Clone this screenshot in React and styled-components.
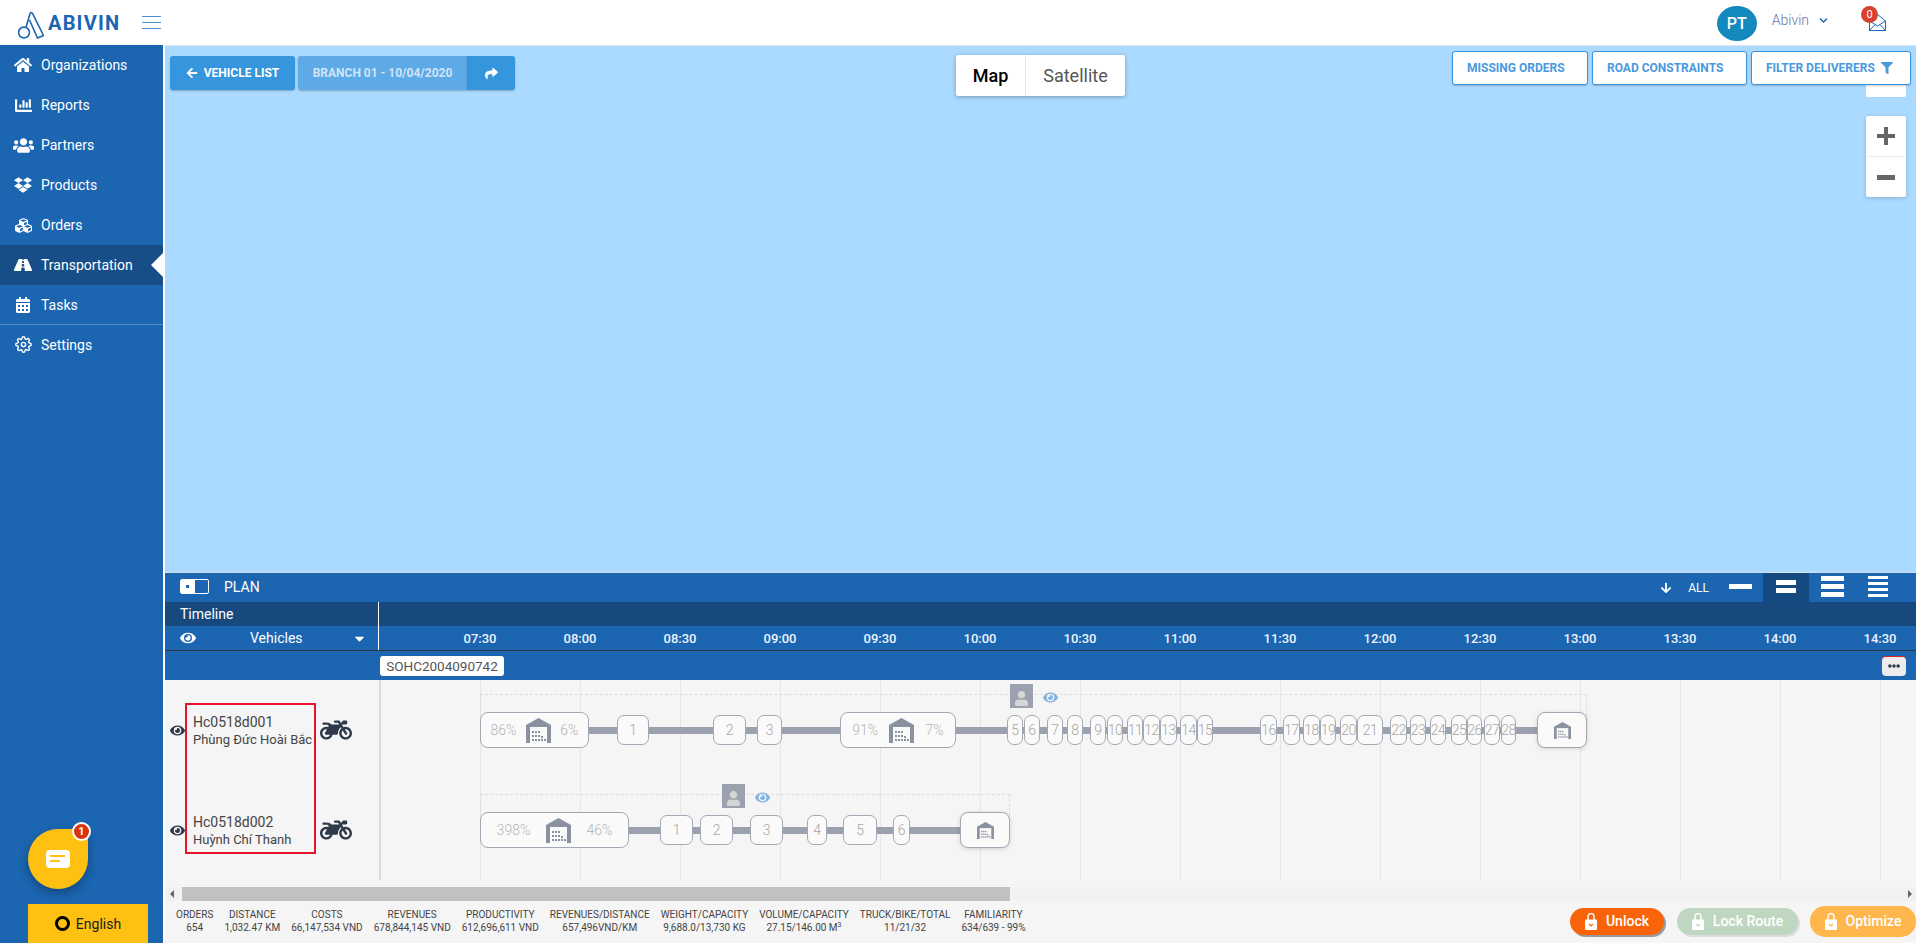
import React from 'react';
import styled, { createGlobalStyle } from 'styled-components';
import {
  FaHome, FaChartBar, FaUsers, FaDropbox, FaCubes, FaRoad, FaCalendarAlt, FaChevronDown,
  FaArrowLeft, FaShare, FaFilter, FaArrowDown, FaEye, FaCaretDown,
  FaMotorcycle, FaUser, FaEllipsisH,
} from 'react-icons/fa';
import { FiSettings } from 'react-icons/fi';

const GlobalStyle = createGlobalStyle`
  html, body, #root { margin: 0; height: 100%; }
  body { font-family: Roboto, "Liberation Sans", sans-serif; overflow: hidden; background: #fff; }
  * { box-sizing: border-box; }
`;

const BLUE = '#1b65b1';
const CHART_LEFT = 381;

const Page = styled.div`
  display: flex;
  flex-direction: column;
  height: 943px;
  overflow: hidden;
`;

const Header = styled.header`
  height: 45px;
  flex: none;
  display: flex;
  align-items: center;
  background: #fff;
  padding: 0 30px 0 18px;
`;

const LogoMark = styled.svg`
  width: 26px;
  height: 28px;
  margin-top: 4px;
`;

const LogoText = styled.span`
  margin-left: 4px;
  color: ${BLUE};
  font-size: 20px;
  font-weight: 700;
  letter-spacing: 1.2px;
`;

const Burger = styled.div`
  margin-left: 22px;
  width: 19px;
  display: flex;
  flex-direction: column;
  gap: 5.3px;
  span { height: 1px; background: #4a8fd0; }
`;

const HeaderRight = styled.div`
  margin-left: auto;
  display: flex;
  align-items: center;
`;

const Avatar = styled.div`
  width: 40px;
  height: 35px;
  margin-top: 1px;
  border-radius: 50%;
  background: #1389bd;
  color: #fff;
  font-size: 16px;
  font-weight: 500;
  display: flex;
  align-items: center;
  justify-content: center;
`;

const UserName = styled.span`
  margin-left: 15px;
  color: #6a74a8;
  font-size: 14px;
  font-weight: 300;
  margin-top: -5px;
`;

const UserChevron = styled(FaChevronDown)`
  margin-left: 10px;
  margin-top: -5px;
  color: ${BLUE};
  font-size: 9px;
`;

const Mail = styled.div`
  position: relative;
  margin-left: 41px;
  margin-top: -1px;
  line-height: 0;
`;

const MailBadge = styled.span`
  position: absolute;
  left: -8px;
  top: -8px;
  width: 17px;
  height: 17px;
  border-radius: 50%;
  background: #d9412f;
  color: #fff;
  font-size: 11px;
  line-height: 17px;
  text-align: center;
`;

const Body = styled.div`
  flex: 1;
  display: flex;
  min-height: 0;
`;

const Sidebar = styled.nav`
  position: relative;
  width: 163px;
  flex: none;
  margin-right: 2px;
  background: ${BLUE};
  display: flex;
  flex-direction: column;
`;

const NavItem = styled.div`
  position: relative;
  height: 40px;
  display: flex;
  align-items: center;
  color: #fff;
  font-size: 14px;
  background: ${(p) => (p.$active ? '#174e88' : 'transparent')};
  ${(p) => p.$divided && 'border-top: 1px solid rgba(255,255,255,.25); margin-top: -1px;'}
  ${(p) => p.$active && `
    &::after {
      content: '';
      position: absolute;
      right: 0;
      top: 8px;
      border-style: solid;
      border-width: 12px 12px 12px 0;
      border-color: transparent #fff transparent transparent;
    }
  `}
`;

const NavIcon = styled.span`
  width: 41px;
  flex: none;
  display: flex;
  justify-content: center;
  padding-left: 5px;
  font-size: ${(p) => p.$size}px;
`;

const ChatBubble = styled.div`
  position: absolute;
  left: 28px;
  top: 784px;
  width: 60px;
  height: 60px;
  background: #fec111;
  border-radius: 50% 12% 50% 50%;
  box-shadow: 0 4px 10px rgba(0, 0, 0, 0.3);
  display: flex;
  align-items: center;
  justify-content: center;
`;

const ChatBadge = styled.span`
  position: absolute;
  right: -3px;
  top: -7px;
  width: 19px;
  height: 19px;
  border-radius: 50%;
  border: 2px solid #fff;
  background: #d8340f;
  color: #fff;
  font-size: 11px;
  font-weight: 700;
  line-height: 15px;
  text-align: center;
`;

const LanguageButton = styled.div`
  margin: auto 0 0 28px;
  width: 120px;
  height: 39px;
  background: #fec111;
  color: #1c1c1c;
  font-size: 14px;
  display: flex;
  align-items: center;
  justify-content: center;
  gap: 6px;
`;

const LanguageDot = styled.span`
  width: 15px;
  height: 15px;
  border-radius: 50%;
  border: 3px solid #000;
`;

const Main = styled.main`
  flex: 1;
  min-width: 0;
  display: flex;
  flex-direction: column;
`;

const MapArea = styled.section`
  position: relative;
  flex: 1;
  background: #aadaff;
  border-top: 1px solid #dfe6ec;
`;

const MapToolbar = styled.div`
  position: absolute;
  inset: 5px 5px auto 5px;
  display: grid;
  grid-template-columns: 1fr auto 1fr;
  align-items: start;
  z-index: 2;
`;

const ToolGroupLeft = styled.div`
  display: flex;
  gap: 3px;
  padding-top: 5px;
`;

const ToolGroupRight = styled.div`
  display: flex;
  justify-content: flex-end;
  gap: 4px;
`;

const FilledButton = styled.div`
  height: 34px;
  display: flex;
  align-items: center;
  justify-content: center;
  gap: 6px;
  color: ${(p) => (p.$muted ? '#cfe4f8' : '#fff')};
  background: ${(p) => (p.$muted ? '#5eaae6' : '#3595dd')};
  font-size: 12px;
  font-weight: 700;
  width: ${(p) => p.$width}px;
  border-radius: ${(p) => p.$radius || '3px'};
  box-shadow: 0 1px 2px rgba(0, 0, 0, 0.25);
`;

const JoinedButtons = styled.div`
  display: flex;
`;

const MapTabs = styled.div`
  display: flex;
  height: 41px;
  margin-top: 4px;
  background: #fff;
  border-radius: 2px;
  box-shadow: 0 1px 4px rgba(0, 0, 0, 0.3);
`;

const MapTab = styled.div`
  display: flex;
  align-items: center;
  justify-content: center;
  width: ${(p) => p.$width}px;
  font-size: 18px;
  color: ${(p) => (p.$active ? '#000' : '#565656')};
  font-weight: ${(p) => (p.$active ? 500 : 400)};
  & + & { border-left: 1px solid #e6e6e6; }
`;

const OutlineButton = styled.div`
  height: 34px;
  display: flex;
  align-items: center;
  gap: 6px;
  padding-left: 14px;
  width: ${(p) => p.$width}px;
  border: 1px solid #3a93db;
  border-radius: 3px;
  background: #fff;
  color: #4a98de;
  font-size: 12px;
  font-weight: 700;
  box-shadow: 0 1px 2px rgba(0, 0, 0, 0.2);
`;

const StreetPeg = styled.div`
  position: absolute;
  right: 10px;
  top: 39px;
  width: 40px;
  height: 12px;
  background: #fff;
  border-radius: 0 0 2px 2px;
`;

const ZoomControl = styled.div`
  position: absolute;
  right: 10px;
  top: 70px;
  width: 40px;
  height: 81px;
  background: #fff;
  border-radius: 2px;
  box-shadow: 0 1px 4px rgba(0, 0, 0, 0.2);
  display: flex;
  flex-direction: column;
  align-items: center;
`;

const ZoomButton = styled.div`
  flex: 1;
  width: 35px;
  display: flex;
  align-items: center;
  justify-content: center;
  & + & { border-top: 1px solid #e6e6e6; }
`;

const Panel = styled.section`
  flex: none;
  height: 371px;
  display: flex;
  flex-direction: column;
  background: #f5f5f5;
`;

const PlanBar = styled.div`
  height: 30px;
  flex: none;
  display: flex;
  align-items: stretch;
  background: ${BLUE};
  border-top: 1px solid #d5dde5;
  color: #fff;
  padding: 0 15px;
`;

const ViewToggle = styled.div`
  align-self: center;
  margin-bottom: 2px;
  width: 29px;
  height: 15px;
  border: 1px solid #fff;
  border-radius: 2px;
  display: flex;
  span { width: 14px; background: #fff; position: relative; }
  span::after {
    content: '';
    position: absolute;
    left: 5px;
    top: 5px;
    width: 3px;
    height: 3px;
    background: ${BLUE};
  }
`;

const PlanTitle = styled.span`
  align-self: center;
  margin: 0 0 2px 15px;
  font-size: 14px;
`;

const PlanTools = styled.div`
  margin-left: auto;
  display: flex;
  align-items: center;
`;

const AllLabel = styled.span`
  margin: 0 8px 0 16px;
  font-size: 12px;
`;

const DensityButton = styled.div`
  width: 46px;
  align-self: stretch;
  display: flex;
  flex-direction: column;
  align-items: center;
  justify-content: center;
  gap: ${(p) => p.$gap}px;
  padding-bottom: 2px;
  background: ${(p) => (p.$active ? '#144a80' : 'transparent')};
  span { display: block; height: ${(p) => p.$bar}px; width: ${(p) => p.$barWidth}px; background: #fff; }
`;

const TableRow = styled.div`
  flex: none;
  height: 24px;
  display: flex;
  align-items: stretch;
  background: ${(p) => (p.$dark ? '#17497f' : BLUE)};
  color: #fff;
`;

const HeadCell = styled.div`
  width: 214px;
  flex: none;
  display: flex;
  align-items: center;
  padding-left: 15px;
  border-right: 1px solid #fff;
  font-size: 14px;
`;

const VehiclesLabel = styled.span`
  margin-left: 54px;
`;

const HeadCaret = styled(FaCaretDown)`
  margin-left: auto;
  margin-right: 11px;
  font-size: 15px;
`;

const TimeAxis = styled.div`
  display: flex;
  padding-left: 51px;
  align-items: center;
`;

const TimeLabel = styled.span`
  width: 100px;
  flex: none;
  text-align: center;
  font-size: 13px;
  font-weight: 500;
  color: #eef4fb;
`;

const OrderRow = styled.div`
  flex: none;
  height: 30px;
  display: flex;
  align-items: center;
  justify-content: space-between;
  background: ${BLUE};
  border-top: 1px solid #2a3440;
  padding: 0 10px 0 215px;
`;

const OrderTag = styled.span`
  width: 124px;
  height: 20px;
  background: #fff;
  border-radius: 3px;
  color: #555;
  font-size: 13.5px;
  line-height: 20px;
  text-align: center;
`;

const DotsButton = styled.div`
  width: 24px;
  height: 20px;
  background: #ececec;
  border-top: 1px solid #e02020;
  border-radius: 4px;
  color: #2e3a4a;
  font-size: 12px;
  display: flex;
  align-items: center;
  justify-content: center;
`;

const ChartBody = styled.div`
  position: relative;
  flex: none;
  height: 200px;
  display: flex;
`;

const VehicleColumn = styled.div`
  position: relative;
  width: 216px;
  flex: none;
  border-right: 2px solid #dcdcdc;
`;

const VehicleRow = styled.div`
  height: 100px;
  display: flex;
  align-items: center;
  padding-left: 5px;
`;

const VehicleEye = styled(FaEye)`
  color: #2e3a4a;
  font-size: 15px;
  flex: none;
`;

const VehicleInfo = styled.div`
  width: 127px;
  margin-left: 8px;
  flex: none;
  color: #444;
  font-size: 13px;
  line-height: 18px;
  white-space: nowrap;
`;

const VehicleCode = styled.div`
  font-size: 14px;
  margin-top: 1px;
`;

const VehicleBike = styled(FaMotorcycle)`
  color: #2e3a4a;
  font-size: 32px;
  flex: none;
`;

const Highlight = styled.div`
  position: absolute;
  left: 20px;
  top: 23px;
  width: 131px;
  height: 151px;
  border: 2px solid #e8132a;
  pointer-events: none;
`;

const Canvas = styled.div`
  position: relative;
  flex: 1;
  overflow: hidden;
`;

const GridLine = styled.div`
  position: absolute;
  top: 0;
  bottom: 0;
  width: 1px;
  background: #e6e6e6;
`;

const RouteRow = styled.div`
  position: relative;
  height: 100px;
`;

const RouteOutline = styled.div`
  position: absolute;
  top: 14px;
  height: 22px;
  border: 1px dashed #dcdcdc;
  border-bottom: 0;
`;

const RouteBar = styled.div`
  position: absolute;
  top: 47px;
  height: 7px;
  background: #9ba1ae;
`;

const Depot = styled.div`
  position: absolute;
  top: 32px;
  height: 36px;
  display: flex;
  align-items: center;
  justify-content: space-evenly;
  background: #fafafa;
  border: 1px solid #a2a8b4;
  border-radius: 8px;
  color: #b4b4b4;
  font-size: 14px;
  font-weight: 300;
  ${(p) => p.$end && 'box-shadow: 0 1px 4px rgba(0,0,0,.15);'}
`;

const Stop = styled.div`
  position: absolute;
  top: 35px;
  height: 30px;
  display: flex;
  align-items: center;
  justify-content: center;
  background: #fafafa;
  border: 1px solid #a2a8b4;
  border-radius: 7px;
  color: #a6a6a6;
  font-size: 14px;
  font-weight: 300;
  letter-spacing: -0.5px;
  white-space: nowrap;
`;

const DriverBox = styled.div`
  position: absolute;
  top: 4px;
  width: 23px;
  height: 24px;
  background: #9ba1ae;
  color: #d6d6d6;
  font-size: 15px;
  display: flex;
  align-items: flex-end;
  justify-content: center;
  padding-bottom: 2px;
`;

const DriverEye = styled(FaEye)`
  position: absolute;
  top: 10px;
  color: #84b4de;
  font-size: 15px;
`;

const ScrollTrack = styled.div`
  position: relative;
  flex: none;
  height: 14px;
  margin-top: 7px;
  background: #f1f1f1;
  padding-left: 17px;
  display: flex;
`;

const ScrollThumb = styled.div`
  width: 828px;
  background: #c1c1c1;
`;

const ScrollArrow = styled.span`
  position: absolute;
  top: 3px;
  ${(p) => (p.$right ? 'right: 4px;' : 'left: 5px;')}
  border-style: solid;
  border-width: 4px 4px 4px 0;
  border-color: transparent #666 transparent transparent;
  ${(p) => p.$right && 'transform: scaleX(-1);'}
`;

const Footer = styled.footer`
  flex: 1;
  display: flex;
  align-items: center;
  justify-content: space-between;
  padding: 0 0 2px 11px;
`;

const Stats = styled.div`
  display: flex;
  gap: 11px;
`;

const Stat = styled.div`
  text-align: center;
  color: #444;
  font-size: 10px;
  line-height: 13px;
  white-space: nowrap;
  sup { font-size: 7px; line-height: 0; }
`;

const Actions = styled.div`
  display: flex;
  align-items: center;
`;

const ActionButton = styled.div`
  display: flex;
  align-items: center;
  justify-content: center;
  gap: 9px;
  width: ${(p) => p.$width}px;
  height: ${(p) => p.$height}px;
  margin-left: ${(p) => p.$gap}px;
  border-radius: 15px;
  background: ${(p) => p.$color};
  color: #fff;
  font-size: 14px;
  font-weight: 500;
  box-shadow: ${(p) => p.$shadow || 'none'};
`;

const NAV = [
  { label: 'Organizations', icon: <FaHome />, size: 18 },
  { label: 'Reports', icon: <FaChartBar />, size: 17 },
  { label: 'Partners', icon: <FaUsers />, size: 21 },
  { label: 'Products', icon: <FaDropbox />, size: 18 },
  { label: 'Orders', icon: <FaCubes />, size: 17 },
  { label: 'Transportation', icon: <FaRoad />, size: 18, active: true },
  { label: 'Tasks', icon: <FaCalendarAlt />, size: 16 },
  { label: 'Settings', icon: <FiSettings />, size: 17, divided: true },
];

const TIMES = ['07:30', '08:00', '08:30', '09:00', '09:30', '10:00', '10:30', '11:00', '11:30', '12:00', '12:30', '13:00', '13:30', '14:00', '14:30'];

// x positions are page pixels, the route sits on the time axis
const ROUTES = [
  {
    outline: [480, 1587],
    bar: [589, 1537],
    driver: 1010,
    eye: 1043,
    depots: [
      { from: 480, to: 589, left: '86%', right: '6%' },
      { from: 840, to: 956, left: '91%', right: '7%' },
      { from: 1537, to: 1587, end: true },
    ],
    stops: [
      [617, 649], [713, 746], [757, 782], [1007, 1023], [1024, 1040], [1047, 1063], [1067, 1083], [1090, 1106], [1107, 1123],
      [1127, 1143], [1143, 1160], [1160, 1177], [1180, 1197], [1197, 1213], [1260, 1277], [1283, 1300], [1303, 1320], [1320, 1336],
      [1340, 1357], [1357, 1383], [1390, 1407], [1410, 1426], [1430, 1446], [1451, 1467], [1467, 1482], [1484, 1500], [1501, 1516],
    ],
  },
  {
    outline: [480, 1010],
    bar: [629, 960],
    driver: 722,
    eye: 755,
    depots: [
      { from: 480, to: 629, left: '398%', right: '46%' },
      { from: 960, to: 1010, end: true },
    ],
    stops: [[660, 693], [700, 733], [750, 783], [807, 827], [843, 877], [893, 910]],
  },
];

const VEHICLES = [
  { code: 'Hc0518d001', driver: 'Phùng Đức Hoài Bắc' },
  { code: 'Hc0518d002', driver: 'Huỳnh Chí Thanh' },
];

const STATS = [
  ['ORDERS', '654'],
  ['DISTANCE', '1,032.47 KM'],
  ['COSTS', '66,147,534 VND'],
  ['REVENUES', '678,844,145 VND'],
  ['PRODUCTIVITY', '612,696,611 VND'],
  ['REVENUES/DISTANCE', '657,496VND/KM'],
  ['WEIGHT/CAPACITY', '9,688.0/13,730 KG'],
  ['VOLUME/CAPACITY', <>27.15/146.00 M<sup>3</sup></>],
  ['TRUCK/BIKE/TOTAL', '11/21/32'],
  ['FAMILIARITY', '634/639 - 99%'],
];

const Logo = () => (
  <LogoMark viewBox="0 0 26 28" fill="none" stroke={BLUE} strokeWidth="1.6">
    <circle cx="6" cy="21.5" r="5.4" />
    <path d="M8 16.5 L12 2.5 Q13 0.5 14.5 2.5 L25.5 24.5 L19.5 27 L11.5 9" />
  </LogoMark>
);

const MailIcon = () => (
  <svg width="17" height="17" viewBox="0 0 17 17" fill="none" stroke={BLUE} strokeWidth="1">
    <path d="M0.5 7 L8.5 0.5 L16.5 7 V16.5 H0.5 Z" />
    <path d="M0.5 7 L8.5 12 L16.5 7 M0.5 16.5 L6 10.5 M16.5 16.5 L11 10.5" />
  </svg>
);

const DepotIcon = ({ size }) => (
  <svg width={size} height={size} viewBox="0 0 25 25">
    <path d="M0 7 L12.5 0 L25 7 V25 H0 Z" fill="#8a919f" />
    <rect x="4" y="9" width="17" height="16" fill="#fafafa" />
    <g fill="#8a919f">
      <rect x="6" y="13" width="2" height="2" /><rect x="9" y="13" width="2" height="2" /><rect x="12" y="13" width="2" height="2" />
      <rect x="6" y="17" width="2" height="2" /><rect x="9" y="17" width="2" height="2" /><rect x="12" y="17" width="2" height="2" />
      <rect x="6" y="21" width="2" height="2" /><rect x="9" y="21" width="2" height="2" /><rect x="12" y="21" width="2" height="2" />
      <rect x="15" y="21" width="2" height="2" /><rect x="18" y="21" width="2" height="2" /><rect x="15" y="18" width="2" height="2" />
    </g>
  </svg>
);

const LockIcon = ({ color }) => (
  <svg width="12" height="17" viewBox="0 0 12 17">
    <path d="M3 7 V3.5 a3 3 0 0 1 6 0 V7" fill="none" stroke="#fff" strokeWidth="1.4" />
    <rect x="0" y="6.5" width="12" height="10.5" rx="1" fill="#fff" />
    <path d="M4 11 L6 13 L8 11" fill="none" stroke={color} strokeWidth="1.2" />
  </svg>
);

const Density = ({ lines, ...rest }) => (
  <DensityButton {...rest}>
    {Array.from({ length: lines }, (_, i) => <span key={i} />)}
  </DensityButton>
);

const x = (page) => page - CHART_LEFT;

const App = () => {
  return (
    <Page>
      <GlobalStyle />
      <Header>
        <Logo />
        <LogoText>ABIVIN</LogoText>
        <Burger><span /><span /><span /></Burger>
        <HeaderRight>
          <Avatar>PT</Avatar>
          <UserName>Abivin</UserName>
          <UserChevron />
          <Mail>
            <MailIcon />
            <MailBadge>0</MailBadge>
          </Mail>
        </HeaderRight>
      </Header>
      <Body>
        <Sidebar>
          {NAV.map((item) => (
            <NavItem key={item.label} $active={item.active} $divided={item.divided}>
              <NavIcon $size={item.size}>{item.icon}</NavIcon>
              {item.label}
            </NavItem>
          ))}
          <ChatBubble>
            <svg width="24" height="18" viewBox="0 0 24 18">
              <rect width="24" height="18" rx="4" fill="#fff" />
              <rect x="4" y="5" width="15" height="2" fill="#fec111" />
              <rect x="4" y="10" width="10" height="2" fill="#fec111" />
            </svg>
            <ChatBadge>1</ChatBadge>
          </ChatBubble>
          <LanguageButton>
            <LanguageDot />
            English
          </LanguageButton>
        </Sidebar>
        <Main>
          <MapArea>
            <StreetPeg />
            <ZoomControl>
              <ZoomButton>
                <svg width="18" height="18" viewBox="0 0 18 18"><path d="M7 0h4v7h7v4h-7v7H7v-7H0V7h7z" fill="#666" /></svg>
              </ZoomButton>
              <ZoomButton>
                <svg width="18" height="5" viewBox="0 0 18 5"><rect width="18" height="5" fill="#666" /></svg>
              </ZoomButton>
            </ZoomControl>
            <MapToolbar>
              <ToolGroupLeft>
                <FilledButton $width={125}><FaArrowLeft />VEHICLE LIST</FilledButton>
                <JoinedButtons>
                  <FilledButton $muted $width={169} $radius="3px 0 0 3px">BRANCH 01 - 10/04/2020</FilledButton>
                  <FilledButton $width={48} $radius="0 3px 3px 0"><FaShare size={13} /></FilledButton>
                </JoinedButtons>
              </ToolGroupLeft>
              <MapTabs>
                <MapTab $active $width={69}>Map</MapTab>
                <MapTab $width={100}>Satellite</MapTab>
              </MapTabs>
              <ToolGroupRight>
                <OutlineButton $width={136}>MISSING ORDERS</OutlineButton>
                <OutlineButton $width={155}>ROAD CONSTRAINTS</OutlineButton>
                <OutlineButton $width={160}>FILTER DELIVERERS<FaFilter size={12} /></OutlineButton>
              </ToolGroupRight>
            </MapToolbar>
          </MapArea>
          <Panel>
            <PlanBar>
              <ViewToggle><span /></ViewToggle>
              <PlanTitle>PLAN</PlanTitle>
              <PlanTools>
                <FaArrowDown size={12} />
                <AllLabel>ALL</AllLabel>
                <Density lines={1} $gap={0} $bar={5} $barWidth={23} />
                <Density lines={2} $active $gap={3} $bar={5} $barWidth={20} />
                <Density lines={3} $gap={3} $bar={5} $barWidth={23} />
                <Density lines={4} $gap={2.5} $bar={3.5} $barWidth={20} />
              </PlanTools>
            </PlanBar>
            <TableRow $dark>
              <HeadCell>Timeline</HeadCell>
            </TableRow>
            <TableRow>
              <HeadCell>
                <FaEye size={16} />
                <VehiclesLabel>Vehicles</VehiclesLabel>
                <HeadCaret />
              </HeadCell>
              <TimeAxis>
                {TIMES.map((t) => <TimeLabel key={t}>{t}</TimeLabel>)}
              </TimeAxis>
            </TableRow>
            <OrderRow>
              <OrderTag>SOHC2004090742</OrderTag>
              <DotsButton><FaEllipsisH /></DotsButton>
            </OrderRow>
            <ChartBody>
              <VehicleColumn>
                {VEHICLES.map((v) => (
                  <VehicleRow key={v.code}>
                    <VehicleEye />
                    <VehicleInfo>
                      <VehicleCode>{v.code}</VehicleCode>
                      {v.driver}
                    </VehicleInfo>
                    <VehicleBike />
                  </VehicleRow>
                ))}
                <Highlight />
              </VehicleColumn>
              <Canvas>
                {TIMES.map((t, i) => (
                  <GridLine key={t} style={{ left: x(480 + i * 100) }} />
                ))}
                {ROUTES.map((route, r) => (
                  <RouteRow key={r}>
                    <RouteOutline style={{ left: x(route.outline[0]), width: route.outline[1] - route.outline[0] }} />
                    <RouteBar style={{ left: x(route.bar[0]), width: route.bar[1] - route.bar[0] }} />
                    <DriverBox style={{ left: x(route.driver) }}><FaUser /></DriverBox>
                    <DriverEye style={{ left: x(route.eye) }} />
                    {route.depots.map((d) => (
                      <Depot key={d.from} $end={d.end} style={{ left: x(d.from), width: d.to - d.from }}>
                        {d.left && <span>{d.left}</span>}
                        <DepotIcon size={d.end ? 17 : 25} />
                        {d.right && <span>{d.right}</span>}
                      </Depot>
                    ))}
                    {route.stops.map(([from, to], i) => (
                      <Stop key={from} style={{ left: x(from), width: to - from }}>{i + 1 + (r === 0 && i >= 3 ? 1 : 0)}</Stop>
                    ))}
                  </RouteRow>
                ))}
              </Canvas>
            </ChartBody>
            <ScrollTrack>
              <ScrollArrow />
              <ScrollThumb />
              <ScrollArrow $right />
            </ScrollTrack>
            <Footer>
              <Stats>
                {STATS.map(([label, value]) => (
                  <Stat key={label}>{label}<br />{value}</Stat>
                ))}
              </Stats>
              <Actions>
                <ActionButton $width={94} $height={27} $gap={0} $color="#f9640a" $shadow="2px 2px 0 #9a9a9a"><LockIcon color="#f9640a" />Unlock</ActionButton>
                <ActionButton $width={121} $height={27} $gap={13} $color="#bfd7c0" $shadow="2px 2px 0 #dcdcdc"><LockIcon color="#bfd7c0" />Lock Route</ActionButton>
                <ActionButton $width={106} $height={31} $gap={12} $color="#ffb74d"><LockIcon color="#ffb74d" />Optimize</ActionButton>
              </Actions>
            </Footer>
          </Panel>
        </Main>
      </Body>
    </Page>
  );
};

export default App;
